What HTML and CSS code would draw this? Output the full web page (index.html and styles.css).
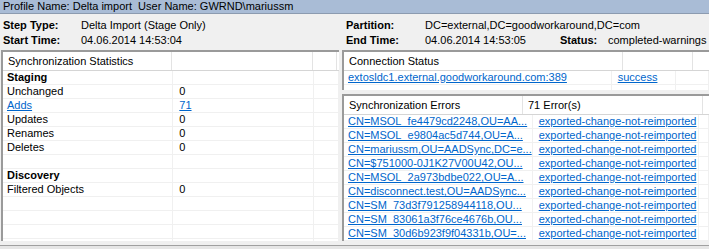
FILE: index.html
```html
<!DOCTYPE html>
<html lang="en">
<head>
    <meta charset="UTF-8">
    <title>Run Profile Details</title>
    <link rel="stylesheet" href="styles.css">
</head>
<body>

<div class="title-bar">Profile Name: Delta import  User Name: GWRND\mariussm</div>

<!-- run summary -->
<div class="summary">
    <span class="label">Step Type:</span>
    <span>Delta Import (Stage Only)</span>
    <span class="label">Partition:</span>
    <span class="span-rest">DC=external,DC=goodworkaround,DC=com</span>

    <span class="label">Start Time:</span>
    <span>04.06.2014 14:53:04</span>
    <span class="label">End Time:</span>
    <span>04.06.2014 14:53:05</span>
    <span class="label">Status:</span>
    <span>completed-warnings</span>
</div>

<div class="panels">
    <!-- statistics -->
    <div class="list stats">
        <div class="list-head">
            <div class="hcell" style="width: 169px">Synchronization Statistics</div>
            <div class="hcell" style="width: 141px"></div>
            <div class="hcell" style="width: 24px"></div>
        </div>
        <table>
            <colgroup><col style="width: 170px"><col style="width: 141px"><col style="width: 25px"></colgroup>
            <tr><td class="group">Staging</td><td></td><td></td></tr>
            <tr><td>Unchanged</td><td>0</td><td></td></tr>
            <tr><td><a href="#">Adds</a></td><td><a href="#">71</a></td><td></td></tr>
            <tr><td>Updates</td><td>0</td><td></td></tr>
            <tr><td>Renames</td><td>0</td><td></td></tr>
            <tr><td>Deletes</td><td>0</td><td></td></tr>
            <tr><td></td><td></td><td></td></tr>
            <tr><td class="group">Discovery</td><td></td><td></td></tr>
            <tr><td>Filtered Objects</td><td>0</td><td></td></tr>
            <tr><td></td><td></td><td></td></tr>
            <tr><td></td><td></td><td></td></tr>
            <tr><td></td><td></td><td></td></tr>
            <tr><td></td><td></td><td></td></tr>
        </table>
    </div>

    <div class="right-col">
        <!-- connection status -->
        <div class="list conn">
            <div class="list-head">
                <div class="hcell" style="width: 279px">Connection Status</div>
                <div class="hcell" style="width: 70px"></div>
                <div class="hcell" style="width: 40px"></div>
            </div>
            <table>
                <colgroup><col style="width: 280px"><col style="width: 70px"><col style="width: 40px"></colgroup>
                <tr><td><a href="#">extosldc1.external.goodworkaround.com:389</a></td><td><a href="#">success</a></td><td></td></tr>
                <tr><td></td><td></td><td></td></tr>
            </table>
        </div>

        <!-- sync errors -->
        <div class="list errors">
            <div class="list-head">
                <div class="hcell" style="width: 179px">Synchronization Errors</div>
                <div class="hcell" style="width: 180px">71 Error(s)</div>
                <div class="hcell" style="width: 40px"></div>
            </div>
            <table>
                <colgroup><col style="width: 180px"><col style="width: 180px"><col style="width: 40px"></colgroup>
                <tr><td><a href="#">CN=MSOL_fe4479cd2248,OU=AA...</a></td><td><a href="#">exported-change-not-reimported</a></td><td></td></tr>
                <tr><td><a href="#">CN=MSOL_e9804ac5d744,OU=A...</a></td><td><a href="#">exported-change-not-reimported</a></td><td></td></tr>
                <tr><td><a href="#">CN=mariussm,OU=AADSync,DC=e...</a></td><td><a href="#">exported-change-not-reimported</a></td><td></td></tr>
                <tr><td><a href="#">CN=$751000-0J1K27V00U42,OU...</a></td><td><a href="#">exported-change-not-reimported</a></td><td></td></tr>
                <tr><td><a href="#">CN=MSOL_2a973bdbe022,OU=A...</a></td><td><a href="#">exported-change-not-reimported</a></td><td></td></tr>
                <tr><td><a href="#">CN=disconnect.test,OU=AADSync...</a></td><td><a href="#">exported-change-not-reimported</a></td><td></td></tr>
                <tr><td><a href="#">CN=SM_73d3f791258944118,OU...</a></td><td><a href="#">exported-change-not-reimported</a></td><td></td></tr>
                <tr><td><a href="#">CN=SM_83061a3f76ce4676b,OU...</a></td><td><a href="#">exported-change-not-reimported</a></td><td></td></tr>
                <tr><td><a href="#">CN=SM_30d6b923f9f04331b,OU=...</a></td><td><a href="#">exported-change-not-reimported</a></td><td></td></tr>
            </table>
        </div>
    </div>
</div>

<div class="status-bar"></div>

</body>
</html>
```

FILE: styles.css
```css
body {
    margin: 0;
    width: 709px;
    height: 249px;
    overflow: hidden;
    background: #f0f0f0;
    font-family: "Liberation Sans", Arial, sans-serif;
    font-size: 11px;
    color: #000;
}
a {
    color: #0066cc;
    text-decoration: underline;
}

.title-bar {
    height: 13px;
    line-height: 13px;
    padding-left: 3px;
    background: #a9bcd6;
    border-bottom: 1px solid #8c9bb0;
    white-space: pre;
}

.summary {
    display: grid;
    grid-template-columns: 78px 265px 79px 135px 48px 1fr;
    grid-auto-rows: 15px;
    align-items: center;
    height: 33px;
    padding: 3px 0 0 3px;
    white-space: nowrap;
}
.summary .label {
    font-weight: bold;
}
.span-rest {
    grid-column: 4 / 7;
}

.panels {
    display: flex;
    gap: 3px;
    padding-left: 1px;
    height: 191px;
}
.right-col {
    display: flex;
    flex-direction: column;
    gap: 4px;
    flex: 1;
    min-width: 0;
}

.list {
    background: #fff;
    border-top: 2px solid #9a9a9a;
    border-left: 2px solid #9a9a9a;
    overflow: hidden;
}
.stats {
    width: 336px;
}
.conn {
    height: 38px;
}
.errors {
    flex: 1;
}

.list-head {
    display: flex;
    height: 18px;
    border-bottom: 1px solid #d5d5d5;
}
.hcell {
    flex: none;
    box-sizing: border-box;
    padding-left: 5px;
    line-height: 18px;
    border-right: 1px solid #e3e3e3;
    white-space: nowrap;
}

table {
    border-collapse: collapse;
    table-layout: fixed;
}
td {
    height: 13px;
    padding: 0 0 0 6px;
    line-height: 13px;
    border-bottom: 1px solid #f0f0f0;
    border-right: 1px solid #f0f0f0;
    white-space: nowrap;
    overflow: hidden;
}
td:first-child {
    padding-left: 4px;
}
td.group {
    font-weight: bold;
}

.status-bar {
    margin-top: 4px;
    height: 3px;
    border-top: 1px solid #a0a0a0;
    background: #e6e6e6;
}
```
